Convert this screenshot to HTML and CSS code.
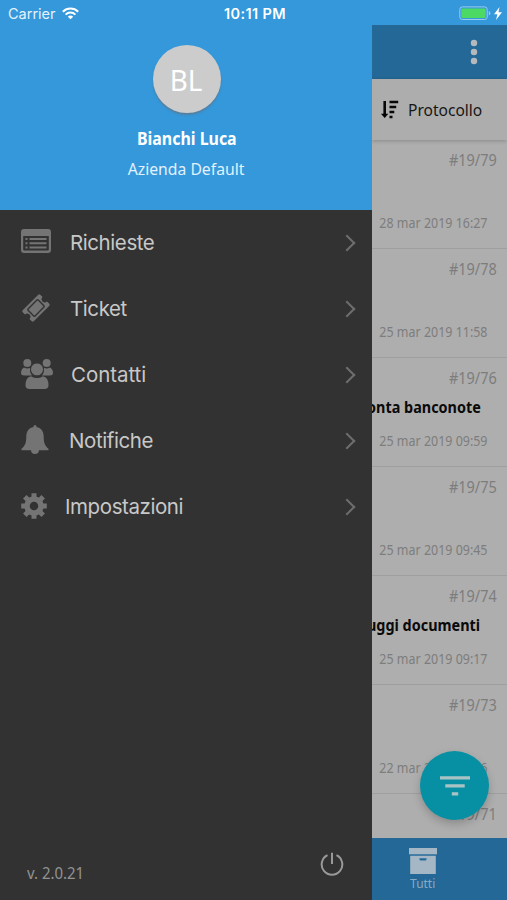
FILE: index.html
```html
<!DOCTYPE html>
<html lang="it">
<head>
<meta charset="utf-8">
<title>Ticket</title>
<link rel="stylesheet" href="styles.css">
</head>
<body>
<div class="app">
  <header class="status">
    <div class="carrier"><span>Carrier</span>
      <svg width="17" height="13" viewBox="0 0 17 13" fill="none" stroke="#fff" stroke-width="2"><path d="M.8 4.7a11 11 0 0 1 15.4 0M3.6 7.6a7 7 0 0 1 9.8 0"/><path d="M8.5 12.3 5.8 9.7a4 4 0 0 1 5.4 0z" fill="#fff" stroke="none"/></svg>
    </div>
    <div class="clock">10:11 PM</div>
    <div class="power">
      <svg width="43" height="15" viewBox="0 0 43 15"><rect x=".8" y=".9" width="27.4" height="12.6" rx="2.5" fill="none" stroke="#9acced"/><rect x="2.3" y="2.4" width="24.4" height="9.6" rx="1" fill="#4cd964"/><path d="M29.8 5v4.400q1.500-.5 1.500-2.200T29.800 5z" fill="#9acced"/><path d="M40.500 1 35 8.200h3.400L37 14l6-7.800h-3.500z" fill="#fff"/></svg>
    </div>
  </header>
  <aside class="drawer">
    <section class="profile">
      <div class="avatar"><span>BL</span></div>
      <div class="name">Bianchi Luca</div>
      <div class="company">Azienda Default</div>
    </section>
    <nav class="menu">
      <a class="item"><svg class="ico" width="30" height="24" viewBox="0 0 30 24"><path fill="#747474" fill-rule="evenodd" d="M3 0h24a3 3 0 0 1 3 3v18a3 3 0 0 1-3 3H3a3 3 0 0 1-3-3V3a3 3 0 0 1 3-3zM2.200 7v13.600q0 1 1 1h23.600q1 0 1-1V7z"/><path stroke="#747474" stroke-width="1.900" d="M4.500 10h2M8.500 10h17M4.500 14.200h2M8.500 14.200h17M4.500 18.500h2M8.500 18.500h17"/></svg><span class="label richieste">Richieste</span><i class="chevron"></i></a>
      <a class="item"><svg class="ico ico-ticket" width="30" height="30" viewBox="0 0 30 30"><g transform="rotate(-45 15 15) translate(1.200 1.200) scale(.92)"><path fill="#747474" d="M3 6.500h24a1.500 1.500 0 0 1 1.500 1.500v3.600a3.400 3.400 0 0 0 0 6.800V22a1.500 1.500 0 0 1-1.500 1.500H3A1.500 1.500 0 0 1 1.500 22v-3.600a3.400 3.400 0 0 0 0-6.800V8A1.500 1.500 0 0 1 3 6.500z"/><rect x="7.200" y="9.600" width="15.600" height="10.800" rx="1" fill="none" stroke="#323232" stroke-width="1.500"/></g></svg><span class="label ticket">Ticket</span><i class="chevron"></i></a>
      <a class="item"><svg class="ico ico-people" width="32" height="30" viewBox="0 0 32 30" fill="#747474"><circle cx="6.300" cy="4" r="4"/><circle cx="25.700" cy="4" r="4"/><path d="M3 8.400q3 1.800 6.200.4-.8 4.400 1.800 7.700H3.500Q0 16.500 0 14q0-4 3-5.600zM29 8.400q-3 1.800-6.200.4.800 4.400-1.800 7.700h7.500Q32 16.500 32 14q0-4-3-5.600z"/><circle cx="16" cy="10.400" r="6.500" stroke="#323232" stroke-width="1"/><path d="M10 17.200q6 3.800 12 0 5.500 1 5.500 9Q27.500 30 23.500 30h-15q-4 0-4-3.800 0-8 5.500-9z"/></svg><span class="label contatti">Contatti</span><i class="chevron"></i></a>
      <a class="item"><svg class="ico ico-bell" width="28" height="30" viewBox="0 0 28 30" fill="#747474"><path d="M12.500 2V1.400a1.500 1.500 0 0 1 3 0V2c4.500.8 7.200 4.300 7.200 9.500 0 6.500 1.300 9.500 4.800 12.200v1.500H.5v-1.500c3.500-2.700 4.800-5.700 4.800-12.200 0-5.200 2.700-8.700 7.200-9.500zM10 25h8a4 4 0 0 1-8 0z"/></svg><span class="label notifiche">Notifiche</span><i class="chevron"></i></a>
      <a class="item"><svg class="ico ico-gear" width="26" height="26" viewBox="-13 -13 26 26"><g fill="none" stroke="#747474"><circle r="7" stroke-width="5.500"/><path stroke-width="5" d="M0-12.800V-8M0 12.800V8M-12.800 0H-8M12.800 0H8M-9.200-9.200-5.700-5.700M9.200 9.200 5.700 5.700M-9.200 9.200-5.700 5.700M9.200-9.200 5.700-5.700"/></g></svg><span class="label impostazioni">Impostazioni</span><i class="chevron"></i></a>
    </nav>
    <footer class="foot">
      <span class="version">v. 2.0.21</span>
      <svg width="24" height="24" viewBox="0 0 24 24" fill="none" stroke="#999" stroke-width="2"><path d="M7.500 3.200a10.300 10.300 0 1 0 9 0M12 .8V12"/></svg>
    </footer>
  </aside>
  <main class="page">
    <div class="appbar"><svg width="8" height="26" viewBox="0 0 8 26" fill="#b5b9bc"><circle cx="4" cy="4" r="3.200"/><circle cx="4" cy="13" r="3.200"/><circle cx="4" cy="22" r="3.200"/></svg></div>
    <div class="sort"><svg width="18" height="19" viewBox="0 0 18 19"><path d="M3.700 1v14M8.500 2h8.700M8.500 7h6.700M8.500 12h4.800M8.500 17h3" stroke="#080808" stroke-width="2.600"/><path d="M0 13.800h7.300L3.700 18z"/></svg><span>Protocollo</span></div>
    <div class="list">
      <article class="row"><span class="num">#19/79</span><b></b><time>28 mar 2019 16:27</time></article>
      <article class="row"><span class="num">#19/78</span><b></b><time>25 mar 2019 11:58</time></article>
      <article class="row"><span class="num">#19/76</span><b>onta banconote</b><time>25 mar 2019 09:59</time></article>
      <article class="row"><span class="num">#19/75</span><b></b><time>25 mar 2019 09:45</time></article>
      <article class="row"><span class="num">#19/74</span><b class="docs">uggi documenti</b><time>25 mar 2019 09:17</time></article>
      <article class="row"><span class="num">#19/73</span><b></b><time>22 mar 2019 17:46</time></article>
      <article class="row"><span class="num">#19/71</span></article>
    </div>
    <div class="tabs"><div class="tab"><svg width="28" height="26" viewBox="0 0 28 26" fill="#a5b7c5"><path d="M0 0h28v6.300H0z"/><path fill-rule="evenodd" d="M1.200 7.700h25.600V26H1.200zM10.500 10.200v1q0 1.300 1.300 1.300h4.400q1.300 0 1.300-1.300v-1z"/></svg><span>Tutti</span></div></div>
    <button class="fab"><svg width="30" height="20" viewBox="0 0 30 20" stroke="#a9c3c5" stroke-width="3.400"><path d="M0 1.900h30M5.300 9.900h19.400M11.800 17.900h6.400"/></svg></button>
  </main>
</div>
</body>
</html>
```
FILE: styles.css
```css
* { box-sizing: border-box; }
body { margin: 0; font-family: "Noto Sans", "Open Sans", sans-serif; }
.app {
  width: 507px; height: 900px; overflow: hidden;
  display: grid; grid-template: 25px 1fr / 372px 1fr;
  background: #3498db;
}
.status {
  grid-column: 1 / 3; display: grid; grid-template-columns: 1fr auto 1fr;
  align-items: center; padding: 2px 5px 0 8px;
  color: #fff; font: 15px/20px Inter, sans-serif;
}
.carrier { display: flex; align-items: center; gap: 6px; color: #e4f2fc; font-size: 14.500px; }
.clock { font-weight: 600; font-size: 14.500px; letter-spacing: .35px; }
.power { display: flex; justify-content: flex-end; }
.drawer { display: flex; flex-direction: column; background: #323232; min-height: 0; }
.profile {
  height: 185px; flex: none; background: #3498db; color: #fff;
  display: flex; flex-direction: column; align-items: center; padding: 20px 0 0 1px;
}
.avatar {
  width: 68px; height: 68px; border-radius: 50%; background: #ccc;
  display: flex; align-items: center; justify-content: center;
  font-size: 29px; box-shadow: 0 2px 2px #557f9e;
}
.avatar span { transform: scaleX(.96); }
.name { font-weight: 700; font-size: 17.500px; line-height: 24px; margin-top: 13px; transform: scaleX(.91); }
.company { font-size: 17px; line-height: 24px; margin-top: 7px; color: #e2f1fb; transform: scaleX(.925); }
.menu { flex: 1; }
.item { height: 66px; display: flex; align-items: center; padding: 0 16px 0 20px; }
.ico { flex: none; overflow: visible; margin: -4px 0 0 1px; }
.ico-ticket, .ico-people { margin-top: -3px; }
.ico-bell { margin-top: -3px; }
.ico-gear { margin-top: -3px; }
.label { flex: 1; font: 20.500px/28px Inter, sans-serif; letter-spacing: -.42px; color: #c8c8c8; margin-left: 19px; }
.contatti { margin-left: 18px; letter-spacing: -.05px; }
.notifiche { margin-left: 20px; }
.impostazioni { margin-left: 18px; }
.chevron {
  width: 12px; height: 12px; border: solid #6d6d6d; border-width: 2px 2px 0 0;
  transform: translateX(-3px) rotate(45deg);
}
.foot { height: 71px; display: flex; justify-content: space-between; padding: 23px 28px 0 27px; }
.version { color: #929292; font-size: 16px; line-height: 24px; margin-top: 9px; transform: scaleX(.935); transform-origin: left; }
.page { display: flex; flex-direction: column; overflow: hidden; position: relative; background: #aeaeae; min-width: 0; }
.appbar { height: 54px; flex: none; background: #246897; display: flex; align-items: center; justify-content: flex-end; padding-right: 29px; }
.sort {
  height: 61px; flex: none; display: flex; align-items: center; gap: 9px; padding-left: 9px;
  background: #adadad; color: #161616; font-size: 17px;
  box-shadow: 0 1px 4px rgba(0,0,0,.22); position: relative;
}
.sort span { transform: scaleX(.915); transform-origin: left; }
.list { flex: 1; overflow: hidden; }
.row {
  height: 109px; border-bottom: 1px solid #9f9f9f;
  display: flex; flex-direction: column; align-items: flex-end; padding: 8px 10px 0 0;
}
.num, .row b, .row time { transform: scaleX(.89); transform-origin: right; white-space: nowrap; }
.row b { height: 24px; margin: 5px 16px 0 0; font-size: 16.200px; line-height: 24px; color: #0a0a0a; }
.row b.docs { margin-right: 17px; }
.num { font-size: 16.300px; line-height: 24px; color: #7d7d7d; }
.row time { margin: 12px 10px 0 0; font-size: 14px; line-height: 20px; color: #7d7d7d; }
.tabs { height: 62px; flex: none; background: #246897; display: flex; padding-left: 37px; }
.tab { display: flex; flex-direction: column; align-items: center; padding-top: 10px; font-size: 13px; line-height: 19px; color: #8baac2; }
.tab span { transform: scaleX(.92); }
.fab {
  position: absolute; right: 18px; bottom: 80px; width: 69px; height: 69px;
  border: 0; border-radius: 50%; background: #0790a3; padding: 0;
  display: flex; align-items: center; justify-content: center;
  box-shadow: 0 4px 9px rgba(0,0,0,.2);
}
```
